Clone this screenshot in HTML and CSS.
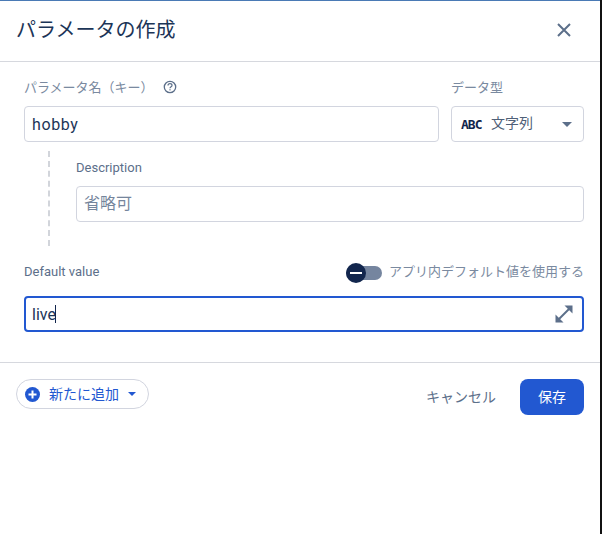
FILE: index.html
```html
<!DOCTYPE html>
<html lang="ja">
<head>
<meta charset="utf-8">
<title>パラメータの作成</title>
<link rel="stylesheet" href="styles.css">
</head>
<body>
<div class="dialog">
  <header class="head">
    <h1 class="title">パラメータの作成</h1>
    <svg class="close" width="16" height="16" viewBox="0 0 16 16"><path d="M2 2 L14 14 M14 2 L2 14" stroke="#5c6f8a" stroke-width="2" fill="none"/></svg>
  </header>
  <main class="body">
    <div class="row-key">
      <div class="key-col">
        <div class="label-row">
          <span class="label">パラメータ名（キー）</span>
          <svg class="help" width="14" height="14" viewBox="0 0 14 14"><circle cx="7" cy="7" r="5.7" fill="none" stroke="#5c6f8a" stroke-width="1.3"/><path d="M5 5.6 C5 4.3 6 3.7 7 3.7 C8.1 3.7 9 4.4 9 5.4 C9 6.7 7 6.8 7 8.3" fill="none" stroke="#5c6f8a" stroke-width="1.2"/><rect x="6.4" y="9.2" width="1.2" height="1.2" fill="#5c6f8a"/></svg>
        </div>
        <div class="field"><span class="value wide">hobby</span></div>
      </div>
      <div class="type-col">
        <div class="label-row"><span class="label">データ型</span></div>
        <div class="field select">
          <span class="abc">ABC</span>
          <span class="select-text">文字列</span>
          <span class="caret"></span>
        </div>
      </div>
    </div>
    <div class="desc-wrap">
      <div class="label-small">Description</div>
      <div class="field"><span class="placeholder">省略可</span></div>
    </div>
    <div class="default-head">
      <span class="label">Default value</span>
      <div class="toggle-group">
        <span class="toggle"><span class="knob"><span class="minus"></span></span></span>
        <span class="label">アプリ内デフォルト値を使用する</span>
      </div>
    </div>
    <div class="field focused">
      <span class="value">live</span><span class="cursor"></span>
      <svg class="expand" width="20" height="20" viewBox="0 0 20 20"><path d="M4 16 L16 4" stroke="#5c6f8a" stroke-width="2" fill="none"/><path d="M10.5 1.5 H18.5 V9.5 Z M1.5 10.5 V18.5 H9.5 Z" fill="#5c6f8a"/></svg>
    </div>
  </main>
  <footer class="foot">
    <div class="add">
      <svg width="15" height="15" viewBox="0 0 15 15"><circle cx="7.5" cy="7.5" r="7.5" fill="#2258d1"/><path d="M7.5 3.5 V11.5 M3.5 7.5 H11.5" stroke="#fff" stroke-width="2"/></svg>
      <span class="add-text">新たに追加</span>
      <span class="caret small"></span>
    </div>
    <div class="actions">
      <span class="cancel">キャンセル</span>
      <span class="save">保存</span>
    </div>
  </footer>
</div>
</body>
</html>
```
FILE: styles.css
```css
* { box-sizing: border-box; }
html, body { margin: 0; height: 100%; background: #111; }
body { font-family: Roboto, "Noto Sans CJK JP", sans-serif; color: #1c3557; overflow: hidden; }
.dialog { width: 600px; height: 534px; border-top: 1px solid #4a7ab5; background: #fff; }
.head { height: 61px; border-bottom: 1px solid #d6d8de; padding: 0 28px 5px 16px; display: flex; align-items: center; justify-content: space-between; }
.title { margin: 0; font-size: 20px; font-weight: 400; color: #1c3557; }
.close { display: block; margin-top: 3px; }
.body { padding: 0 16px 0 24px; height: 301px; border-bottom: 1px solid #d6d8de; }
.row-key { display: flex; gap: 12px; padding-top: 13px; }
.key-col { flex: 1; }
.type-col { width: 133px; }
.label-row { display: flex; align-items: center; gap: 8px; height: 24px; margin-bottom: 7px; padding-bottom: 2px; }
.label { font-size: 13px; color: #7a8aa0; }
.help { display: block; margin-left: 1px; margin-top: 2px; }
.field { height: 36px; border: 1px solid #d2d5df; border-radius: 4px; display: flex; align-items: center; padding: 0 7px; background: #fff; position: relative; }
.value { font-size: 16px; color: #1c3557; }
.value.wide { letter-spacing: 0.6px; }
.placeholder { font-size: 16px; color: #75859c; padding-bottom: 4px; }
.select { padding: 0 11px 0 9px; }
.abc { font-family: "DejaVu Sans Mono", monospace; font-weight: 700; font-size: 13px; color: #12264d; width: 30px; letter-spacing: -1px; }
.select-text { font-size: 14px; color: #4f6078; flex: 1; padding-bottom: 4px; }
.caret { width: 0; height: 0; border-left: 5px solid transparent; border-right: 5px solid transparent; border-top: 5px solid #5c6f8a; }
.caret.small { border-left-width: 4px; border-right-width: 4px; border-top-width: 4px; border-top-color: #2258d1; margin-left: 9px; }
.desc-wrap { margin-left: 24px; border-left: 2px dashed #d2d5db; margin-top: 9px; padding: 8px 0 24px 26px; }
.label-small { font-size: 13px; color: #5c6f8a; height: 18px; line-height: 18px; margin-bottom: 9px; }
.default-head { display: flex; align-items: center; justify-content: space-between; height: 24px; margin-top: 14px; margin-bottom: 12px; }
.default-head > .label { color: #5c6f8a; padding-bottom: 2px; }
.toggle-group { display: flex; align-items: center; gap: 7px; }
.toggle-group .label { padding-bottom: 4px; }
.toggle { display: block; width: 36px; height: 14px; border-radius: 7px; background: #75859f; position: relative; margin-top: 2px; }
.knob { position: absolute; left: 0; top: -3px; width: 20px; height: 20px; border-radius: 50%; background: #12264d; display: flex; align-items: center; justify-content: center; }
.minus { width: 12px; height: 2px; background: #fff; }
.focused { border: 2px solid #2258d1; padding: 0 6px; }
.cursor { width: 1px; height: 18px; background: #12264d; margin-left: -1px; }
.expand { position: absolute; right: 8px; top: 6px; }
.foot { display: flex; align-items: flex-start; justify-content: space-between; padding: 16px 16px 0 16px; }
.add { display: flex; align-items: center; height: 30px; border: 1px solid #d2d5df; border-radius: 15px; padding: 0 11px 0 8px; width: 133px; }
.add-text { font-size: 14px; color: #2258d1; margin-left: 9px; padding-bottom: 3px; }
.actions { display: flex; align-items: center; gap: 24px; }
.cancel { font-size: 14px; color: #5c6f8a; padding-bottom: 3px; }
.save { display: flex; align-items: center; justify-content: center; width: 64px; height: 36px; border-radius: 8px; background: #2258d1; color: #fff; font-size: 14px; padding-bottom: 3px; }
```
